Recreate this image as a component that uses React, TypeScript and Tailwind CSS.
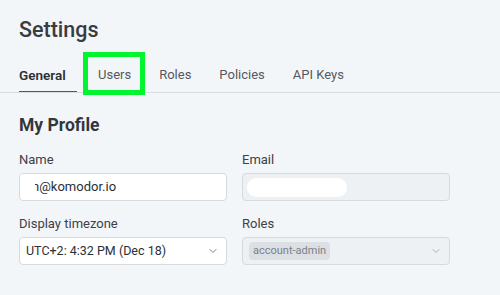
import { ChevronDown } from 'lucide-react';

const tabs = ['General', 'Users', 'Roles', 'Policies', 'API Keys'];

export default function App() {
  return (
    <div className="min-h-screen bg-[#f3f6f9] font-['Roboto',sans-serif] text-[#33363d]">
      <h1 className="pl-[19px] pt-[16px] text-[21.5px] leading-[28px] font-medium text-[#3a3c44]">Settings</h1>

      {/* Tabs */}
      <div className="mt-[21px] flex border-b border-[#d9dce1] pl-[19px]">
        {tabs.map((t, i) => (
          <div
            key={t}
            className={`relative pb-[7px] leading-[20px] ${
              i === 0 ? 'w-[58px] mr-[21px] text-[13.5px] font-semibold text-[#2c2f36]' : 'mr-[28px] text-[13px] text-[#55585f]'
            }`}
          >
            {t}
            {i === 0 && <div className="absolute bottom-0 left-0 h-[1px] w-full bg-[#3b45ff]" />}
            {i === 1 && (
              <div className="absolute left-[-15px] top-[-13px] h-[43px] w-[62px] border-[5px] border-[#00f52e]" />
            )}
          </div>
        ))}
      </div>

      {/* My Profile */}
      <div className="px-[19px] pt-[20px]">
        <h2 className="text-[17.5px] leading-[24px] font-bold text-[#33363d]">My Profile</h2>

        <div className="mt-[14px] grid grid-cols-[208px_208px] gap-x-[15px] gap-y-[14px]">
          <div>
            <div className="text-[13px] leading-[18px] text-[#3d4048]">Name</div>
            <div className="relative mt-[4px] flex h-[28px] items-center rounded-[4px] border border-[#d6d9de] bg-white pl-[12px] text-[13px] text-[#2c2f36]">
              n@komodor.io
              <div className="absolute left-0 top-0 h-full w-[15px] rounded-l-[4px] bg-white" />
            </div>
          </div>
          <div>
            <div className="text-[13px] leading-[18px] text-[#3d4048]">Email</div>
            <div className="mt-[4px] flex h-[28px] items-center rounded-[4px] border border-[#d6d9de] bg-[#eef1f4] pl-[4px]">
              <div className="h-[19px] w-[100px] rounded-full bg-white" />
            </div>
          </div>
          <div>
            <div className="text-[13px] leading-[18px] text-[#3d4048]">Display timezone</div>
            <div className="mt-[4px] flex h-[28px] items-center justify-between rounded-[4px] border border-[#d6d9de] bg-white pl-[6px] pr-[7px] text-[12.5px] text-[#2c2f36]">
              <span>UTC+2: 4:32 PM (Dec 18)</span>
              <ChevronDown size={12} strokeWidth={1.75} className="text-[#6b6f78]" />
            </div>
          </div>
          <div>
            <div className="text-[13px] leading-[18px] text-[#3d4048]">Roles</div>
            <div className="mt-[4px] flex h-[28px] items-center justify-between rounded-[4px] border border-[#d6d9de] bg-[#eef1f4] pl-[6px] pr-[7px]">
              <span className="flex h-[18px] items-center rounded-[4px] bg-[#dcdfe3] px-[4px] text-[11px] text-[#7d818a]">
                account-admin
              </span>
              <ChevronDown size={12} strokeWidth={1.75} className="text-[#a4a8ae]" />
            </div>
          </div>
        </div>
      </div>
    </div>
  );
}
